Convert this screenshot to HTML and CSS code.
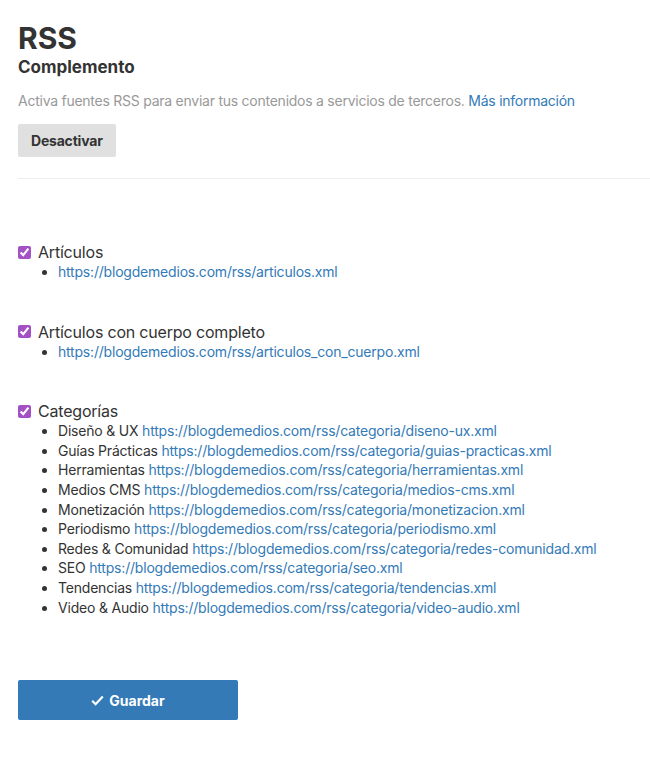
FILE: index.html
```html
<!DOCTYPE html>
<html lang="es">

<head>
    <meta charset="UTF-8">
    <meta name="viewport" content="width=device-width, initial-scale=1.0">
    <title>RSS</title>
    <link rel="stylesheet" href="styles.css">
</head>

<body>
    <div class="page">
        <header class="plugin-head">
            <h1>RSS</h1>
            <h2>Complemento</h2>
            <p class="desc">Activa fuentes RSS para enviar tus contenidos a servicios de terceros. <a href="#">Más información</a></p>
            <button type="button" class="btn-off">Desactivar</button>
        </header>

        <hr class="divider">

        <div class="feeds">
            <div class="feed">
                <label class="feed-label"><input type="checkbox" checked> Artículos</label>
                <ul class="feed-list">
                    <li><a href="#">https://blogdemedios.com/rss/articulos.xml</a></li>
                </ul>
            </div>

            <div class="feed">
                <label class="feed-label"><input type="checkbox" checked> Artículos con cuerpo completo</label>
                <ul class="feed-list">
                    <li><a href="#">https://blogdemedios.com/rss/articulos_con_cuerpo.xml</a></li>
                </ul>
            </div>

            <div class="feed">
                <label class="feed-label"><input type="checkbox" checked> Categorías</label>
                <ul class="feed-list">
                    <li>Diseño &amp; UX <a href="#">https://blogdemedios.com/rss/categoria/diseno-ux.xml</a></li>
                    <li>Guías Prácticas <a href="#">https://blogdemedios.com/rss/categoria/guias-practicas.xml</a></li>
                    <li>Herramientas <a href="#">https://blogdemedios.com/rss/categoria/herramientas.xml</a></li>
                    <li>Medios CMS <a href="#">https://blogdemedios.com/rss/categoria/medios-cms.xml</a></li>
                    <li>Monetización <a href="#">https://blogdemedios.com/rss/categoria/monetizacion.xml</a></li>
                    <li>Periodismo <a href="#">https://blogdemedios.com/rss/categoria/periodismo.xml</a></li>
                    <li>Redes &amp; Comunidad <a href="#">https://blogdemedios.com/rss/categoria/redes-comunidad.xml</a></li>
                    <li>SEO <a href="#">https://blogdemedios.com/rss/categoria/seo.xml</a></li>
                    <li>Tendencias <a href="#">https://blogdemedios.com/rss/categoria/tendencias.xml</a></li>
                    <li>Video &amp; Audio <a href="#">https://blogdemedios.com/rss/categoria/video-audio.xml</a></li>
                </ul>
            </div>
        </div>

        <button type="button" class="btn-save">
            <svg width="13" height="11" viewBox="0 0 13 11"><path d="M1.2 5.8 L4.6 9.2 L11.8 1.6" fill="none" stroke="#fff" stroke-width="2.2"/></svg>
            Guardar
        </button>
    </div>
</body>

</html>
```

FILE: styles.css
```css
* {
    box-sizing: border-box;
}

body {
    margin: 0;
    padding: 0;
    font-family: Inter, "Noto Sans", sans-serif;
    color: #333;
    background: #fff;
}

.page {
    padding: 20px 0 40px 18px;
}

h1 {
    font-size: 30px;
    line-height: 36px;
    font-weight: 700;
    margin: 0;
}

h2 {
    font-size: 17px;
    line-height: 22px;
    font-weight: 700;
    margin: 0;
}

.desc {
    font-size: 14px;
    line-height: 20px;
    letter-spacing: -0.25px;
    color: #999;
    margin: 13px 0 13px;
}

a {
    color: #337ab7;
    text-decoration: none;
}

.btn-off {
    font-family: inherit;
    font-size: 14px;
    font-weight: 700;
    letter-spacing: -0.2px;
    color: #333;
    background-color: #e0e0e0;
    border: 0;
    border-radius: 2px;
    height: 33px;
    padding: 0 13px;
}

.divider {
    border: 0;
    border-top: 1px solid #eee;
    margin: 21px 0 0;
}

.feeds {
    padding-top: 63px;
}

.feed {
    margin-bottom: 40px;
}

.feed-label {
    display: flex;
    align-items: center;
    gap: 7px;
    font-size: 16px;
    line-height: 20px;
    letter-spacing: -0.2px;
}

.feed-label input {
    margin: 0;
    width: 13px;
    height: 13px;
    accent-color: #a451c4;
}

.feed-list {
    margin: 0;
    padding-left: 40px;
    font-size: 14px;
    line-height: 19.6px;
    letter-spacing: -0.2px;
}

.btn-save {
    display: flex;
    align-items: center;
    justify-content: center;
    gap: 5px;
    width: 220px;
    height: 40px;
    margin-top: 63px;
    font-family: inherit;
    font-size: 14px;
    font-weight: 700;
    color: #fff;
    background-color: #337ab7;
    border: 0;
    border-radius: 2px;
}
```
